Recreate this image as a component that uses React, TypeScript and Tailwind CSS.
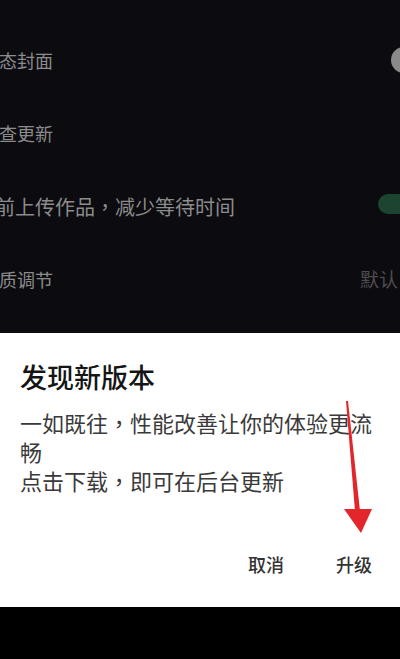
import React from 'react';

const cjk = { fontFamily: '"Noto Sans CJK SC", "Noto Sans", sans-serif' };
const tc = { fontFamily: '"Noto Sans CJK TC", sans-serif' };

// full-width comma drawn centred in its cell, as on the device
function Comma() {
  return <span style={tc}>，</span>;
}

function SettingRow({ label, shift, big, right }: { label: React.ReactNode; shift: string; big?: boolean; right?: React.ReactNode }) {
  return (
    <div className="h-[73px] flex items-center justify-between">
      <span className={`${shift} whitespace-nowrap text-[#8c8c8c] ${big ? 'text-[20px]' : 'text-[18px]'}`}>{label}</span>
      {right}
    </div>
  );
}

export default function App() {
  return (
    <div className="w-[400px] h-[659px] bg-black flex flex-col overflow-hidden" style={cjk}>
      <div className="h-[333px] bg-[#0b0b10] pt-[24px] overflow-hidden">
        <SettingRow
          label="动态封面"
          shift="-ml-[19px]"
          right={<div className="w-[26px] h-[26px] rounded-full bg-[#8a8a8a] -mr-[17px] -mt-[2px]" />}
        />
        <SettingRow label="检查更新" shift="-ml-[19px]" />
        <SettingRow
          label={<>提前上传作品<Comma />减少等待时间</>}
          shift="-ml-[25px]"
          big
          right={<div className="w-[44px] h-[20px] rounded-full bg-[#1d4431] -mr-[22px] -mt-[5px]" />}
        />
        <SettingRow
          label="画质调节"
          shift="-ml-[19px]"
          right={<span className="text-[19px] text-[#4e4e4e] mr-[2px] whitespace-nowrap">默认</span>}
        />
      </div>

      <div className="relative h-[274px] bg-white px-[20px] pt-[24px]">
        <h2 className="text-[27px] leading-[40px] text-[#151515] font-medium">发现新版本</h2>
        <p className="mt-[11px] text-[22px] leading-[29px] text-[#3a3a3a]">
          一如既往<Comma />性能改善让你的体验更流畅
          <br />
          点击下载<Comma />即可在后台更新
        </p>
        <div className="mt-[56px] flex justify-end gap-[52px] pr-[8px] text-[18px] leading-[26px] text-[#333] font-medium">
          <span>取消</span>
          <span>升级</span>
        </div>

        <svg className="absolute left-[336px] top-[64px]" width="44" height="140" viewBox="0 0 44 140">
          <polygon points="10,4 12,4 24,114 19,114" fill="#e3262c" />
          <polygon points="8,112 36,112 25,136" fill="#e3262c" />
        </svg>
      </div>

      <div className="flex-1 bg-black" />
    </div>
  );
}
